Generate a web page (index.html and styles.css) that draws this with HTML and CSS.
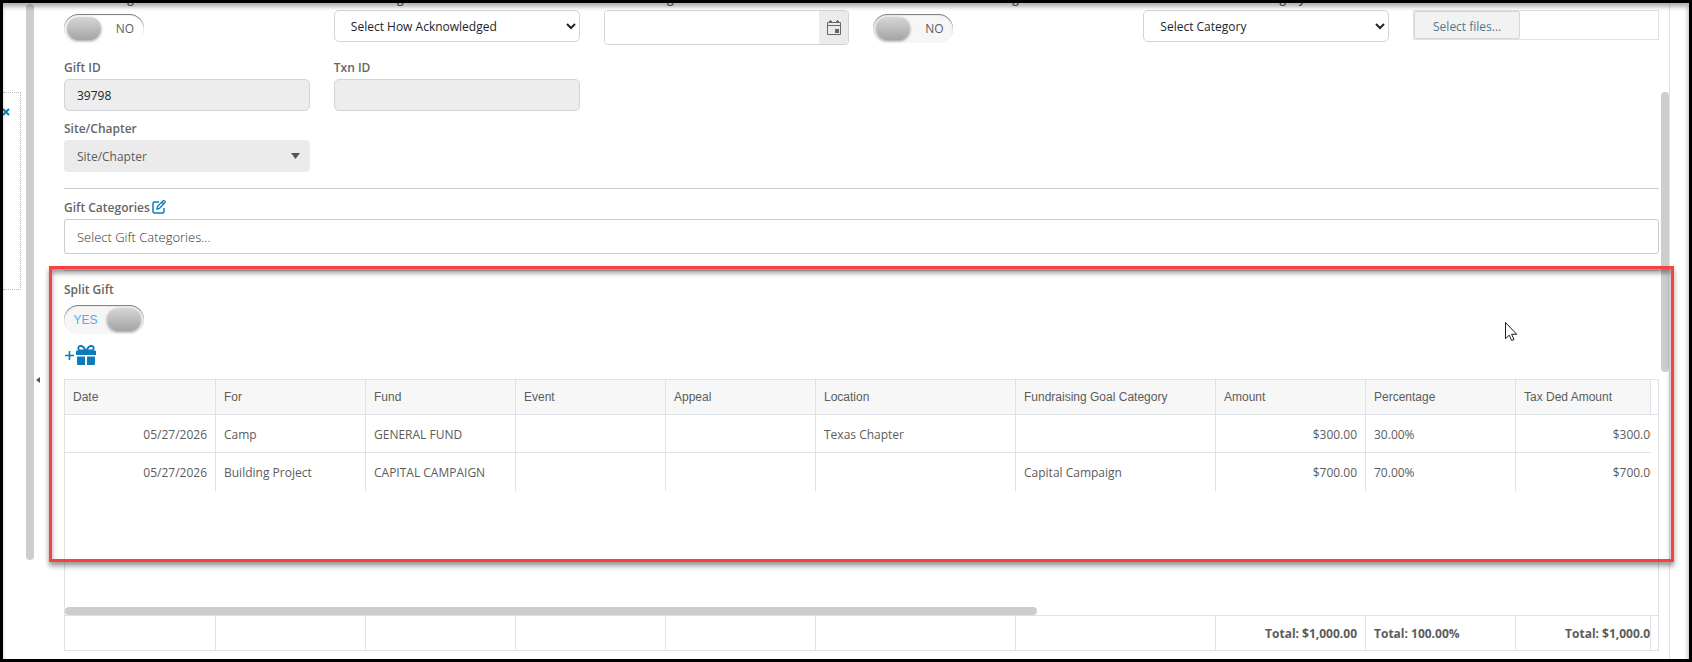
FILE: index.html
```html
<!DOCTYPE html>
<html lang="en">
<head>
    <meta charset="UTF-8">
    <meta name="viewport" content="width=device-width, initial-scale=1.0">
    <title>Gift Details</title>
    <link rel="stylesheet" href="styles.css">
</head>
<body>
    <div class="frame">
        <aside class="side">
            <div class="side-box">
                <button type="button" class="side-close" aria-label="Close">
                    <svg width="7" height="8" viewBox="0 0 7 8"><path d="M0 1l6 6M6 1L0 7" fill="none" stroke="#0a7cba" stroke-width="2"/></svg>
                </button>
            </div>
        </aside>
        <div class="side-scroll"></div>
        <div class="splitter">
            <svg width="4" height="6" viewBox="0 0 4 6"><path d="M4 0v6L0 3z" fill="#555"/></svg>
        </div>

        <main class="content">
            <form class="gift-form">
                <div class="fields fields-top">
                    <div class="field">
                        <label for="acknowledged">Acknowledged</label>
                        <div class="switch switch-gap switch-plain">
                            <input type="checkbox" id="acknowledged">
                            <span class="switch-text">NO</span>
                        </div>
                    </div>
                    <div class="field">
                        <label for="how">Acknowledged How</label>
                        <select id="how" class="control">
                            <option>Select How Acknowledged</option>
                        </select>
                    </div>
                    <div class="field">
                        <label for="ackDate">Acknowledged Date</label>
                        <div class="date-box">
                            <input type="text" id="ackDate">
                            <button type="button" aria-label="Open calendar">
                                <svg width="16" height="16" viewBox="0 0 16 16"><path d="M1.500 2.500h13v12h-13zM1 5.500h14M4.500 0v3M11.500 0v3" fill="none" stroke="#666"/><path d="M3 1h3v2H3zM10 1h3v2h-3zM9 9h4v4H9z" fill="#666"/></svg>
                            </button>
                        </div>
                    </div>
                    <div class="field">
                        <label for="noAck">Do Not Send Acknowledgment</label>
                        <div class="switch switch-gap">
                            <input type="checkbox" id="noAck">
                            <span class="switch-text">NO</span>
                        </div>
                    </div>
                    <div class="field">
                        <label for="category">Donation Revenue Category</label>
                        <select id="category" class="control">
                            <option>Select Category</option>
                        </select>
                    </div>
                    <div class="field">
                        <label for="files">Attachments</label>
                        <div class="upload">
                            <button type="button" id="files">Select files...</button>
                        </div>
                    </div>
                </div>

                <div class="fields">
                    <div class="field">
                        <label for="giftId">Gift ID</label>
                        <input type="text" id="giftId" class="control control-off" value="39798" readonly>
                    </div>
                    <div class="field">
                        <label for="txnId">Txn ID</label>
                        <input type="text" id="txnId" class="control control-off" readonly>
                    </div>
                </div>

                <div class="fields">
                    <div class="field">
                        <label for="site">Site/Chapter</label>
                        <div class="dropdown">
                            <select id="site">
                                <option>Site/Chapter</option>
                            </select>
                            <svg width="9" height="6" viewBox="0 0 9 6"><path d="M0 0h9L4.500 6z" fill="#555"/></svg>
                        </div>
                    </div>
                </div>

                <hr>

                <div class="field">
                    <div class="label-row">
                        <label for="giftCategories">Gift Categories</label>
                        <button type="button" class="icon-btn" aria-label="Edit gift categories">
                            <svg width="14" height="14" viewBox="0 0 14 14"><path d="M7 2H2.500Q1 2 1 3.500v8Q1 13 2.500 13h8q1.500 0 1.500-1.500V8" fill="none" stroke="#0a7cba" stroke-width="1.500"/><path d="M5 9l.6-2.600L11.300.8q.6-.4 1.200.1l.5.500q.5.600 0 1.200L7.500 8.300zM10 2.200l1.800 1.800" fill="none" stroke="#0a7cba" stroke-width="1.300"/></svg>
                        </button>
                    </div>
                    <input type="text" id="giftCategories" class="multi" placeholder="Select Gift Categories...">
                </div>

                <hr>

                <div class="field">
                    <label for="splitGift">Split Gift</label>
                    <div class="switch switch-gap switch-on">
                        <input type="checkbox" id="splitGift" checked>
                        <span class="switch-text">YES</span>
                    </div>
                </div>

                <button type="button" class="add-gift" aria-label="Add split gift">
                    <svg width="32" height="21" viewBox="0 0 32 21">
                        <path d="M1 10.500h9M5.500 6v9" stroke="#0a7cba" stroke-width="1.600"/>
                        <path d="M12 6.500q0-1 1-1h18q1 0 1 1V10H12zM13 11.500h8V20h-7q-1 0-1-1zM23 11.500h8V19q0 1-1 1h-7z" fill="#0a7cba"/>
                        <path d="M21.500 5.500Q19.500 1 16.800 1t-2.500 2.300q0 2.200 2.500 2.200zM22.500 5.500Q24.500 1 27.200 1t2.500 2.300q0 2.200-2.500 2.200z" fill="none" stroke="#0a7cba" stroke-width="1.800"/>
                    </svg>
                </button>

                <div class="grid">
                    <div class="grid-head">
                        <div class="grid-clip">
                            <table>
                                <colgroup><col><col><col><col><col><col class="wide"><col class="wide"><col><col><col></colgroup>
                                <thead>
                                    <tr>
                                        <th>Date</th>
                                        <th>For</th>
                                        <th>Fund</th>
                                        <th>Event</th>
                                        <th>Appeal</th>
                                        <th>Location</th>
                                        <th>Fundraising Goal Category</th>
                                        <th>Amount</th>
                                        <th>Percentage</th>
                                        <th>Tax Ded Amount</th>
                                    </tr>
                                </thead>
                            </table>
                        </div>
                    </div>
                    <div class="grid-body">
                        <div class="grid-clip">
                            <table>
                                <colgroup><col><col><col><col><col><col class="wide"><col class="wide"><col><col><col></colgroup>
                                <tbody>
                                    <tr>
                                        <td class="num">05/27/2026</td>
                                        <td>Camp</td>
                                        <td>GENERAL FUND</td>
                                        <td></td>
                                        <td></td>
                                        <td>Texas Chapter</td>
                                        <td></td>
                                        <td class="num">$300.00</td>
                                        <td>30.00%</td>
                                        <td class="num">$300.00</td>
                                    </tr>
                                    <tr>
                                        <td class="num">05/27/2026</td>
                                        <td>Building Project</td>
                                        <td>CAPITAL CAMPAIGN</td>
                                        <td></td>
                                        <td></td>
                                        <td></td>
                                        <td>Capital Campaign</td>
                                        <td class="num">$700.00</td>
                                        <td>70.00%</td>
                                        <td class="num">$700.00</td>
                                    </tr>
                                </tbody>
                            </table>
                        </div>
                    </div>
                    <div class="grid-scroll"></div>
                    <div class="grid-foot">
                        <div class="grid-clip">
                            <table>
                                <colgroup><col><col><col><col><col><col class="wide"><col class="wide"><col><col><col></colgroup>
                                <tbody>
                                    <tr>
                                        <td></td>
                                        <td></td>
                                        <td></td>
                                        <td></td>
                                        <td></td>
                                        <td></td>
                                        <td></td>
                                        <td class="num">Total: $1,000.00</td>
                                        <td>Total: 100.00%</td>
                                        <td class="num">Total: $1,000.00</td>
                                    </tr>
                                </tbody>
                            </table>
                        </div>
                    </div>
                </div>
            </form>
            <div class="main-scroll"></div>
        </main>

        <div class="highlight"></div>
        <svg class="cursor" width="13" height="20" viewBox="0 0 13 20"><path d="M.5.500v16.200l3.700-3.500 2.400 5.300 2.400-1-2.400-5.200h5.100z" fill="#fff" stroke="#1a1a2a"/></svg>
    </div>
</body>
</html>
```
FILE: styles.css
```css
* {
    box-sizing: border-box;
}
body {
    margin: 0;
    font-family: "Open Sans", "Noto Sans", sans-serif;
    font-size: 12px;
    color: #5c5c5c;
    background-color: #fff;
}
input, select, button {
    font-family: inherit;
    font-size: inherit;
    color: inherit;
    margin: 0;
}
button {
    padding: 0;
    border: none;
    background: none;
    cursor: pointer;
}
svg {
    display: block;
}

/* outer frame */
.frame {
    position: relative;
    display: flex;
    height: 100vh;
    padding-right: 19px;
    border: 3px solid #000;
    overflow: hidden;
}
.frame::after {
    content: "";
    position: absolute;
    inset: 0;
    box-shadow: inset -1px 4px 4px rgba(0, 0, 0, 0.3);
    pointer-events: none;
}

/* left pane */
.side {
    flex: 0 0 23px;
    padding: 89px 5px 0 0;
}
.side-box {
    height: 198px;
    padding-top: 15px;
    border: 1px dotted #bbb;
    border-left: none;
}
.side-close {
    display: block;
}
.side-scroll {
    flex: 0 0 8px;
    height: 556px;
    margin-top: 1px;
    border-radius: 4px;
    background-color: #cdcdcd;
}
.splitter {
    flex: 0 0 8px;
    display: flex;
    align-items: center;
    padding: 98px 0 0 2px;
}

/* main pane */
.content {
    flex: 1;
    min-width: 0;
    display: flex;
    border-right: 1px solid #dee2e6;
}
.gift-form {
    flex: 1;
    min-width: 0;
    display: flex;
    flex-direction: column;
    margin-top: -13px;
    padding: 0 0 8px 22px;
}
.main-scroll {
    flex: 0 0 8px;
    height: 280px;
    margin: 89px 0 0 2px;
    border-radius: 4px;
    background-color: #cdcdcd;
}
.fields {
    display: grid;
    grid-template-columns: repeat(6, 1fr);
    gap: 24px;
    margin-bottom: 9px;
}
.fields-top {
    margin-bottom: 14px;
}
.field label {
    display: block;
    line-height: 18px;
    margin-bottom: 2px;
    font-weight: 600;
    color: #666;
    white-space: nowrap;
}
.control {
    display: block;
    width: 100%;
    height: 32px;
    padding: 0 12px;
    border: 1px solid #ced4da;
    border-radius: 5px;
    background-color: #fff;
    color: #212529;
}
select.control {
    padding: 0 0 0 12px;
}
.control-off {
    background-color: #ededed;
}
.date-box {
    display: flex;
    height: 35px;
    border: 1px solid #ced4da;
    border-radius: 4px;
    overflow: hidden;
}
.date-box input {
    flex: 1;
    min-width: 0;
    border: none;
}
.date-box button {
    display: flex;
    align-items: center;
    justify-content: center;
    width: 29px;
    background-color: #ebebeb;
}
.upload {
    height: 30px;
    border: 1px solid #dee2e6;
}
.upload button {
    width: 106px;
    height: 28px;
    padding-top: 3px;
    border: 1px solid #d5d5d5;
    border-radius: 2px;
    background-color: #f2f2f2;
    color: #50788c;
}
.dropdown {
    display: grid;
    align-items: center;
}
.dropdown select, .dropdown svg {
    grid-area: 1 / 1;
}
.dropdown select {
    appearance: none;
    height: 32px;
    padding: 0 13px;
    border: none;
    border-radius: 4px;
    background-color: #ebebeb;
}
.dropdown svg {
    justify-self: end;
    margin-right: 10px;
    pointer-events: none;
}

/* switches */
.switch {
    display: flex;
    align-items: center;
    width: 80px;
    height: 29px;
    padding: 3px;
    border-radius: 15px;
    background-color: #f6f6f6;
    box-shadow: inset 0 1px 1px #777;
}
.switch-gap {
    margin-top: 6px;
}
.switch-plain {
    background-color: #fff;
}
.switch input {
    appearance: none;
    width: 34px;
    height: 23px;
    border-radius: 12px;
    background: linear-gradient(#d6d6d6, #a4a4a4);
    box-shadow: 0 1px 3px rgba(0, 0, 0, 0.4);
}
.switch-text {
    flex: 1;
    padding-left: 8px;
    text-align: center;
}
.switch-on {
    flex-direction: row-reverse;
}
.switch-on .switch-text {
    padding: 0 3px 0 0;
    font-family: "Liberation Sans", Arial, sans-serif;
    color: #4dabf5;
}

/* gift categories */
hr {
    width: 100%;
    margin: 7px 0 10px;
    border: none;
    border-top: 1px solid #ccc;
}
.field + hr {
    margin-top: 16px;
}
.label-row {
    display: flex;
    gap: 2px;
}
.icon-btn {
    height: 16px;
}
.multi {
    display: block;
    width: 100%;
    height: 35px;
    padding: 0 12px;
    border: 1px solid #ccc;
    border-radius: 3px;
    font-size: 13px;
    font-weight: 300;
}
.multi::placeholder {
    color: #333;
}
.add-gift {
    align-self: flex-start;
    margin: 11px 0 13px;
}

/* grid */
.grid {
    flex: 1;
    display: flex;
    flex-direction: column;
    border: 1px solid #dee2e6;
}
.grid-head, .grid-body, .grid-foot {
    padding-right: 7px;
}
.grid-head {
    border-bottom: 1px solid #dee2e6;
}
.grid-body {
    flex: 1;
}
.grid-foot {
    border-top: 1px solid #dee2e6;
}
.grid-clip {
    overflow: hidden;
}
.grid-head .grid-clip, .grid-foot .grid-clip {
    border-right: 1px solid #dee2e6;
}
.grid table {
    table-layout: fixed;
    width: 1600px;
    border-spacing: 0;
}
.grid col {
    width: 150px;
}
.grid col.wide {
    width: 200px;
}
.grid th, .grid td {
    height: 38px;
    padding: 0 8px;
    border-left: 1px solid #dee2e6;
    text-align: left;
    white-space: nowrap;
}
.grid th:first-child, .grid td:first-child {
    border-left: none;
}
.grid th {
    height: 34px;
    background-color: #f7f7f7;
    font-family: "Liberation Sans", Arial, sans-serif;
    font-weight: normal;
}
.grid-body td {
    padding-top: 1px;
}
.grid-body tr:first-child td {
    border-bottom: 1px solid #dee2e6;
}
.grid-foot td {
    height: 34px;
    font-weight: 700;
}
.grid .num {
    text-align: right;
}
.grid-scroll {
    width: 61%;
    height: 8px;
    border-radius: 4px;
    background-color: #cdcdcd;
}

/* callout over the split gift area */
.highlight {
    position: absolute;
    top: 263px;
    left: 46px;
    right: 15px;
    height: 296px;
    border: 3px solid #fa4141;
    box-shadow: 0 4px 5px rgba(0, 0, 0, 0.4), inset 0 4px 5px rgba(0, 0, 0, 0.4);
    pointer-events: none;
}
.cursor {
    position: absolute;
    top: 319px;
    left: 1502px;
}
```
